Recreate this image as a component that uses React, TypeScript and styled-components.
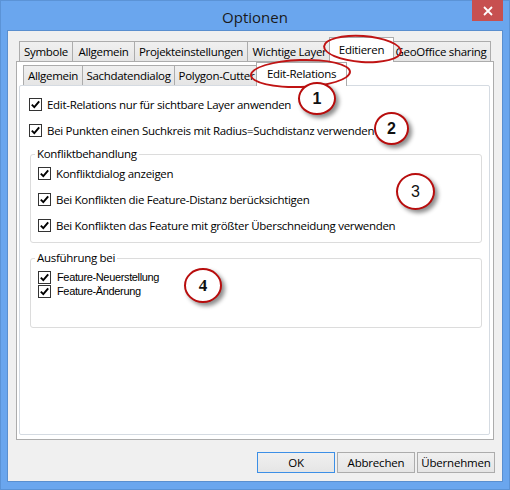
import styled, { createGlobalStyle } from "styled-components";

const UI_FONT = `"Open Sans", "Segoe UI", sans-serif`;

const GlobalStyle = createGlobalStyle`
  html, body {
    margin: 0;
    padding: 0;
  }
  body {
    width: 510px;
    height: 490px;
    overflow: hidden;
    background: #6aa6ee;
    font-family: ${UI_FONT};
  }
`;

const Window = styled.div`
  position: relative;
  box-sizing: border-box;
  width: 510px;
  height: 490px;
  display: flex;
  flex-direction: column;
  padding: 0 7px 8px 7px;
  background: #6aa6ee;
  border: 1px solid #5b93d6;
`;

const TitleBar = styled.div`
  height: 30px;
  display: grid;
  grid-template-columns: 1fr auto 1fr;
  align-items: center;
`;

const Title = styled.div`
  grid-column: 2;
  font-family: ${UI_FONT};
  font-size: 15px;
  color: #1a1a1a;
  padding-top: 1px;
`;

const CloseButton = styled.div`
  grid-column: 3;
  justify-self: end;
  align-self: start;
  width: 31px;
  height: 21px;
  margin: -1px -1px 0 0;
  background: #c75050;
  display: flex;
  align-items: center;
  justify-content: center;
`;

const Client = styled.div`
  flex: 1;
  display: flex;
  flex-direction: column;
  padding: 6px 8px 8px 8px;
  background: #f0f0f0;
  box-shadow: 0 0 0 1px #5a8fcf;
`;

const TabStrip = styled.div<{ $h: number; $pl: number }>`
  display: flex;
  align-items: flex-end;
  height: ${(p) => p.$h}px;
  padding-left: ${(p) => p.$pl}px;
`;

const Tab = styled.div<{ $active?: boolean; $w: number; $h: number }>`
  position: relative;
  z-index: ${(p) => (p.$active ? 1 : 0)};
  box-sizing: border-box;
  width: ${(p) => (p.$active ? p.$w + 4 : p.$w)}px;
  height: ${(p) => (p.$active ? p.$h : 20)}px;
  margin: 0 ${(p) => (p.$active ? -3 : -1)}px ${(p) => (p.$active ? -1 : 0)}px
    ${(p) => (p.$active ? -2 : 0)}px;
  padding-bottom: ${(p) => (p.$active ? 2 : 0)}px;
  border: 1px solid #acacac;
  border-bottom: none;
  background: ${(p) =>
    p.$active ? "#ffffff" : "linear-gradient(#f0f0f0, #e5e5e5)"};
  display: flex;
  align-items: center;
  justify-content: center;
  font-family: ${UI_FONT};
  font-size: 11.5px;
  letter-spacing: -0.3px;
  color: #000;
  white-space: nowrap;
`;

const OuterPanel = styled.div`
  flex: 1;
  display: flex;
  flex-direction: column;
  box-sizing: border-box;
  border: 1px solid #acacac;
  background: #fff;
  padding: 0 3px 4px 2px;
`;

const InnerPanel = styled.div`
  flex: 1;
  box-sizing: border-box;
  border: 1px solid #d5dbe2;
  border-radius: 2px;
  background: #fff;
  display: flex;
  flex-direction: column;
  padding: 12px 8px 0 9px;
`;

const TopRows = styled.div`
  display: flex;
  flex-direction: column;
  gap: 13px;
`;

const Group = styled.fieldset<{ $mt: number; $pb: number; $gap: number }>`
  display: flex;
  flex-direction: column;
  gap: ${(p) => p.$gap}px;
  min-inline-size: 0;
  margin: ${(p) => p.$mt}px -1px 0 1px;
  padding: 6px 7px ${(p) => p.$pb}px 7px;
  border: 1px solid #dcdcdc;
  border-radius: 3px;
`;

const Legend = styled.legend`
  margin-left: -3px;
  padding: 0 2px;
  font-family: ${UI_FONT};
  font-size: 11.5px;
  letter-spacing: -0.3px;
  line-height: 14px;
  color: #000;
`;

const CheckRow = styled.label<{ $compact?: boolean }>`
  display: flex;
  align-items: center;
  gap: ${(p) => (p.$compact ? 6 : 5)}px;
  height: 13px;
  font-family: ${(p) => (p.$compact ? `"Liberation Sans", Arial, sans-serif` : UI_FONT)};
  font-size: ${(p) => (p.$compact ? 11 : 11.5)}px;
  letter-spacing: ${(p) => (p.$compact ? -0.35 : -0.3)}px;
  line-height: 13px;
  color: #000;
  white-space: nowrap;
`;

const Box = styled.span`
  box-sizing: border-box;
  flex: none;
  width: 13px;
  height: 13px;
  border: 1px solid #333;
  background: #fff;
  display: flex;
  align-items: center;
  justify-content: center;
`;

const ButtonRow = styled.div`
  display: flex;
  justify-content: flex-end;
  gap: 2px;
  margin: 12px -1px 0 0;
`;

const DialogButton = styled.button<{ $default?: boolean }>`
  box-sizing: border-box;
  width: 78px;
  height: 21px;
  padding: 0;
  border: 1px solid ${(p) => (p.$default ? "#3c8fe6" : "#acacac")};
  background: linear-gradient(#f0f0f0, #e5e5e5);
  font-family: ${UI_FONT};
  font-size: 11.5px;
  letter-spacing: -0.2px;
  color: #000;
`;

const Callout = styled.div<{
  $x: number;
  $y: number;
  $w: number;
  $h: number;
  $font: "bold" | "plain" | "serif";
}>`
  position: absolute;
  left: ${(p) => p.$x - 1}px;
  top: ${(p) => p.$y - 1}px;
  width: ${(p) => p.$w}px;
  height: ${(p) => p.$h}px;
  box-sizing: border-box;
  border-radius: 50%;
  border: 2px solid #b80d0d;
  background: #fff;
  box-shadow: 3px 3px 4px rgba(0, 0, 0, 0.45);
  display: flex;
  align-items: center;
  justify-content: center;
  font-family: ${(p) =>
    p.$font === "serif"
      ? `"Liberation Serif", serif`
      : `"Liberation Sans", Arial, sans-serif`};
  font-weight: ${(p) => (p.$font === "plain" ? 400 : 700)};
  font-size: ${(p) => (p.$font === "serif" ? 17 : 16)}px;
  color: #111;
  z-index: 3;
`;

const Ring = styled.div<{ $x: number; $y: number; $w: number; $h: number; $rot: number }>`
  position: absolute;
  left: ${(p) => p.$x - 1}px;
  top: ${(p) => p.$y - 1}px;
  width: ${(p) => p.$w}px;
  height: ${(p) => p.$h}px;
  box-sizing: border-box;
  border-radius: 50%;
  border: 2px solid #c01414;
  transform: rotate(${(p) => p.$rot}deg);
  z-index: 2;
`;

const outerTabs = [
  { label: "Symbole", w: 54 },
  { label: "Allgemein", w: 63 },
  { label: "Projekteinstellungen", w: 114 },
  { label: "Wichtige Layer", w: 85 },
  { label: "Editieren", w: 61, active: true },
  { label: "GeoOffice sharing", w: 100 },
];

const innerTabs = [
  { label: "Allgemein", w: 60 },
  { label: "Sachdatendialog", w: 93 },
  { label: "Polygon-Cutter", w: 85 },
  { label: "Edit-Relations", w: 87, active: true },
];

const CheckMark = () => (
  <svg width="11" height="11" viewBox="0 0 11 11">
    <path d="M1.8 5.6 L4.3 8.2 L9.2 2.4" fill="none" stroke="#000" strokeWidth="1.9" />
  </svg>
);

const Check = ({ label, compact }: { label: string; compact?: boolean }) => (
  <CheckRow $compact={compact}>
    <Box>
      <CheckMark />
    </Box>
    {label}
  </CheckRow>
);

const App = () => {
  return (
    <>
      <GlobalStyle />
      <Window>
        <TitleBar>
          <Title>Optionen</Title>
          <CloseButton>
            <svg width="10" height="10" viewBox="0 0 10 10">
              <path d="M1 1 L9 9 M9 1 L1 9" stroke="#fff" strokeWidth="1.8" />
            </svg>
          </CloseButton>
        </TitleBar>
        <Client>
          <TabStrip $h={24} $pl={3}>
            {outerTabs.map((t) => (
              <Tab key={t.label} $w={t.w} $h={25} $active={t.active}>
                {t.label}
              </Tab>
            ))}
          </TabStrip>
          <OuterPanel>
            <TabStrip $h={23} $pl={4}>
              {innerTabs.map((t) => (
                <Tab key={t.label} $w={t.w} $h={24} $active={t.active}>
                  {t.label}
                </Tab>
              ))}
            </TabStrip>
            <InnerPanel>
              <TopRows>
                <Check label="Edit-Relations nur für sichtbare Layer anwenden" />
                <Check label="Bei Punkten einen Suchkreis mit Radius=Suchdistanz verwenden" />
              </TopRows>
              <Group $mt={10} $pb={10} $gap={13}>
                <Legend>Konfliktbehandlung</Legend>
                <Check label="Konfliktdialog anzeigen" />
                <Check label="Bei Konflikten die Feature-Distanz berücksichtigen" />
                <Check label="Bei Konflikten das Feature mit größter Überschneidung verwenden" />
              </Group>
              <Group $mt={8} $pb={29} $gap={1}>
                <Legend>Ausführung bei</Legend>
                <Check compact label="Feature-Neuerstellung" />
                <Check compact label="Feature-Änderung" />
              </Group>
            </InnerPanel>
          </OuterPanel>
          <ButtonRow>
            <DialogButton $default>OK</DialogButton>
            <DialogButton>Abbrechen</DialogButton>
            <DialogButton>Übernehmen</DialogButton>
          </ButtonRow>
        </Client>

        <Ring $x={323} $y={35} $w={79} $h={28} $rot={4} />
        <Ring $x={250} $y={59} $w={101} $h={29} $rot={-2} />
        <Callout $x={298} $y={82} $w={38} $h={33} $font="bold">1</Callout>
        <Callout $x={374} $y={112} $w={35} $h={33} $font="bold">2</Callout>
        <Callout $x={396} $y={173} $w={39} $h={37} $font="plain">3</Callout>
        <Callout $x={184} $y={268} $w={38} $h={35} $font="serif">4</Callout>
      </Window>
    </>
  );
};

export default App;
